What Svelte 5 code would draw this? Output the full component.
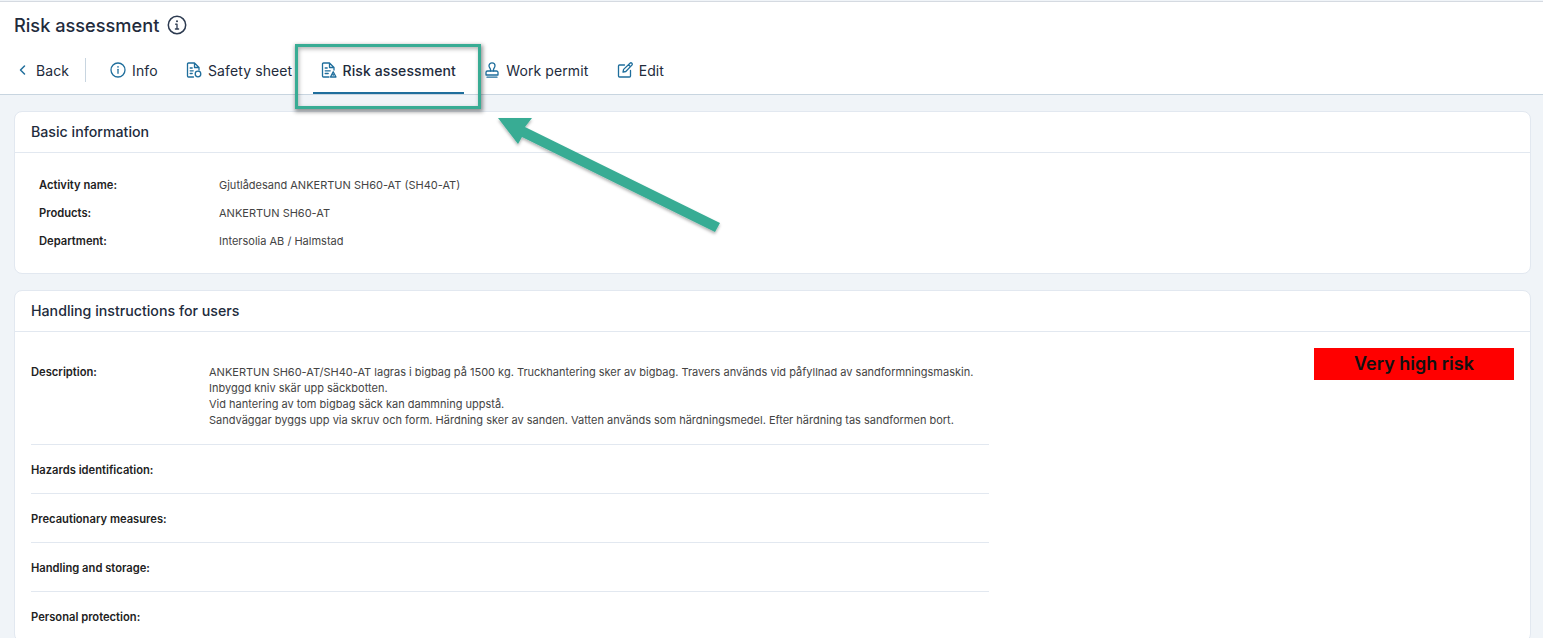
<script lang="ts">
    const basicRows = [
        { label: 'Activity name:', value: 'Gjutlådesand ANKERTUN SH60-AT (SH40-AT)' },
        { label: 'Products:', value: 'ANKERTUN SH60-AT' },
        { label: 'Department:', value: 'Intersolia AB / Halmstad' }
    ];

    const description = [
        'ANKERTUN SH60-AT/SH40-AT lagras i bigbag på 1500 kg. Truckhantering sker av bigbag. Travers används vid påfyllnad av sandformningsmaskin.',
        'Inbyggd kniv skär upp säckbotten.',
        'Vid hantering av tom bigbag säck kan dammning uppstå.',
        'Sandväggar byggs upp via skruv och form. Härdning sker av sanden. Vatten används som härdningsmedel. Efter härdning tas sandformen bort.'
    ];

    const emptyRows = ['Hazards identification:', 'Precautionary measures:', 'Handling and storage:', 'Personal protection:'];
</script>

<div class="page">
    <header class="top">
        <div class="title">
            <h1>Risk assessment</h1>
            <svg class="title-icon" viewBox="0 0 20 20" fill="none" stroke="currentColor" stroke-width="1.5" stroke-linecap="round">
                <circle cx="10" cy="10" r="8.7" />
                <path d="M10 9.200v4.800M8.600 9.200H10M8.400 14h3.200" stroke-width="1.300" />
                <circle cx="10" cy="6.200" r="1" fill="currentColor" stroke="none" />
            </svg>
        </div>
        <nav class="tabs">
            <button class="tab back">
                <svg viewBox="0 0 14 14" fill="none" stroke="currentColor" stroke-width="1.500" stroke-linecap="round" stroke-linejoin="round"><path d="M8.500 3 4.500 7l4 4" /></svg>
                <span>Back</span>
            </button>
            <div class="divider"></div>
            <button class="tab">
                <svg viewBox="0 0 16 16" fill="none" stroke="currentColor" stroke-width="1.300" stroke-linecap="round">
                    <circle cx="8" cy="8" r="7" />
                    <path d="M8 7.300v4" />
                    <circle cx="8" cy="4.900" r="0.800" fill="currentColor" stroke="none" />
                </svg>
                <span>Info</span>
            </button>
            <button class="tab">
                <svg viewBox="0 0 16 16" fill="none" stroke="currentColor" stroke-width="1.300" stroke-linecap="round" stroke-linejoin="round">
                    <path d="M7.500 15H2.500a1 1 0 0 1-1-1V2a1 1 0 0 1 1-1h6l4.500 4.500v2.500M8.500 1v4.500H13" />
                    <path d="M4.200 6h2M4.200 8.800h3M4.200 11.500h2" />
                    <circle cx="12" cy="12" r="2.800" />
                </svg>
                <span>Safety sheet</span>
            </button>
            <button class="tab active">
                <svg viewBox="0 0 16 16" fill="none" stroke="currentColor" stroke-width="1.300" stroke-linecap="round" stroke-linejoin="round">
                    <path d="M13 8V5.500L8.500 1h-6a1 1 0 0 0-1 1v12a1 1 0 0 0 1 1h5.500M8.500 1v4.500H13" />
                    <path d="M4.200 6h2M4.200 8.800h5M4.200 11.500h3" />
                    <path d="M9.500 15 12.200 9.800 15 15zM12.200 12.500v.8" />
                </svg>
                <span>Risk assessment</span>
            </button>
            <button class="tab">
                <svg viewBox="0 0 16 16" fill="none" stroke="currentColor" stroke-width="1.300" stroke-linecap="round" stroke-linejoin="round">
                    <path d="M6.500 9V7.500C6.500 6.500 5 5.500 5 3.800a3 3 0 0 1 6 0c0 1.700-1.500 2.700-1.500 3.700V9" />
                    <path d="M2 13v-2.500A1.500 1.500 0 0 1 3.500 9h9a1.500 1.500 0 0 1 1.500 1.500V13z" />
                    <path d="M3 15.200h10" />
                </svg>
                <span>Work permit</span>
            </button>
            <button class="tab">
                <svg viewBox="0 0 16 16" fill="none" stroke="currentColor" stroke-width="1.300" stroke-linecap="round" stroke-linejoin="round">
                    <path d="M7.500 3H2.500a1 1 0 0 0-1 1v10a1 1 0 0 0 1 1h10a1 1 0 0 0 1-1V8.500" />
                    <path d="M6 10.200l.6-2.800L13 1.200a1.300 1.300 0 0 1 1.900 1.900L8.800 9.500zM11.500 2.700l1.900 1.900" />
                </svg>
                <span>Edit</span>
            </button>
        </nav>
    </header>

    <main class="content">
        <section class="card">
            <h2>Basic information</h2>
            <div class="basic">
                {#each basicRows as row}
                    <div class="basic-row">
                        <strong>{row.label}</strong>
                        <span>{row.value}</span>
                    </div>
                {/each}
            </div>
        </section>

        <section class="card">
            <h2>Handling instructions for users</h2>
            <div class="handling">
                <div class="rows">
                    <div class="row first">
                        <strong>Description:</strong>
                        <div class="text">
                            {#each description as line}
                                <div>{line}</div>
                            {/each}
                        </div>
                    </div>
                    {#each emptyRows as label}
                        <div class="row">
                            <strong>{label}</strong>
                        </div>
                    {/each}
                </div>
                <div class="risk">Very high risk</div>
            </div>
        </section>
    </main>

    <!-- annotation drawn over the screenshot -->
    <div class="highlight"></div>
    <svg class="arrow" viewBox="0 0 250 145" width="250" height="145">
        <defs>
            <filter id="arrow-shadow" x="-10%" y="-10%" width="120%" height="130%">
                <feDropShadow dx="0" dy="2" stdDeviation="1.5" flood-color="#000" flood-opacity="0.3" />
            </filter>
        </defs>
        <polygon
            points="18,18 52,18 45,27 240,123 235,132 42,37 38,44"
            fill="#38ac94"
            filter="url(#arrow-shadow)"
        />
    </svg>
</div>

<style>
    :global(body) {
        margin: 0;
    }

    .page {
        position: relative;
        height: 638px;
        overflow: hidden;
        background: #f0f4f8;
        font-family: Inter, "Liberation Sans", sans-serif;
        color: #222b3c;
    }

    .top {
        height: 92px;
        margin-top: 1px;
        background: #fff;
        border-top: 1px solid #d5dae1;
        border-bottom: 1px solid #c8d5e0;
    }

    .title {
        display: flex;
        align-items: center;
        gap: 8px;
        height: 22px;
        padding: 12px 0 0 14px;
    }

    h1 {
        margin: 0;
        font-size: 18.2px;
        line-height: 22px;
        font-weight: 500;
    }

    .title-icon {
        width: 20px;
        height: 20px;
        color: #2c3a50;
    }

    .tabs {
        display: flex;
        align-items: stretch;
        height: 46px;
        margin-top: 12px;
        padding-left: 8px;
    }

    .tab {
        display: flex;
        align-items: center;
        gap: 6px;
        padding: 0 8px;
        border: none;
        border-bottom: 2px solid transparent;
        background: none;
        font: inherit;
        font-size: 14px;
        letter-spacing: 0.1px;
        color: #222b3c;
    }

    .tab + .tab {
        margin-left: 12.3px;
    }

    .tab svg {
        width: 16px;
        height: 16px;
        color: #1f6e9c;
    }

    .tab.active {
        border-bottom-color: #1f6e9c;
        font-weight: 500;
    }

    .back svg {
        width: 14px;
        height: 14px;
    }

    .divider {
        width: 1px;
        height: 24px;
        margin: 0 16px 2px 8px;
        align-self: center;
        background: #c8d5e0;
    }

    .content {
        display: flex;
        flex-direction: column;
        gap: 16px;
        padding: 16px 12px 0 14px;
    }

    .card {
        background: #fff;
        border: 1px solid #e2e8f0;
        border-radius: 8px;
    }

    h2 {
        margin: 0;
        padding: 0 16px;
        height: 40px;
        line-height: 40px;
        font-size: 14.2px;
        font-weight: 500;
        border-bottom: 1px solid #e2e8f0;
    }

    .basic {
        padding: 18px 24px;
    }

    .basic-row {
        display: flex;
        align-items: center;
        height: 28px;
        font-size: 11px;
        color: #444;
    }

    strong {
        font-size: 11.2px;
        font-weight: 600;
        color: #222;
    }

    .basic-row strong {
        width: 180px;
    }

    .handling {
        display: flex;
        justify-content: space-between;
        padding: 16px 16px 0;
    }

    .rows {
        width: 957.5px;
    }

    .row {
        display: flex;
        align-items: center;
        height: 48px;
        border-bottom: 1px solid #e2e8f0;
        font-size: 11px;
    }

    .row strong {
        width: 178px;
        flex-shrink: 0;
        padding-top: 1px;
    }

    .row.first {
        height: 80px;
        padding-top: 16px;
        align-items: flex-start;
        line-height: 16px;
    }

    .row.first strong {
        padding-top: 0;
    }

    .text {
        color: #444;
    }

    .risk {
        width: 200px;
        height: 32px;
        line-height: 32px;
        text-align: center;
        background: #f00;
        color: #111;
        font-size: 18px;
        font-weight: 600;
    }

    .highlight {
        position: absolute;
        left: 295px;
        top: 44px;
        width: 180px;
        height: 59px;
        border: 3px solid #38ac94;
        box-shadow: 1px 2px 4px 1px rgba(0, 0, 0, 0.4), inset 1px 2px 4px rgba(0, 0, 0, 0.3);
    }

    .arrow {
        position: absolute;
        left: 480px;
        top: 100px;
    }
</style>
